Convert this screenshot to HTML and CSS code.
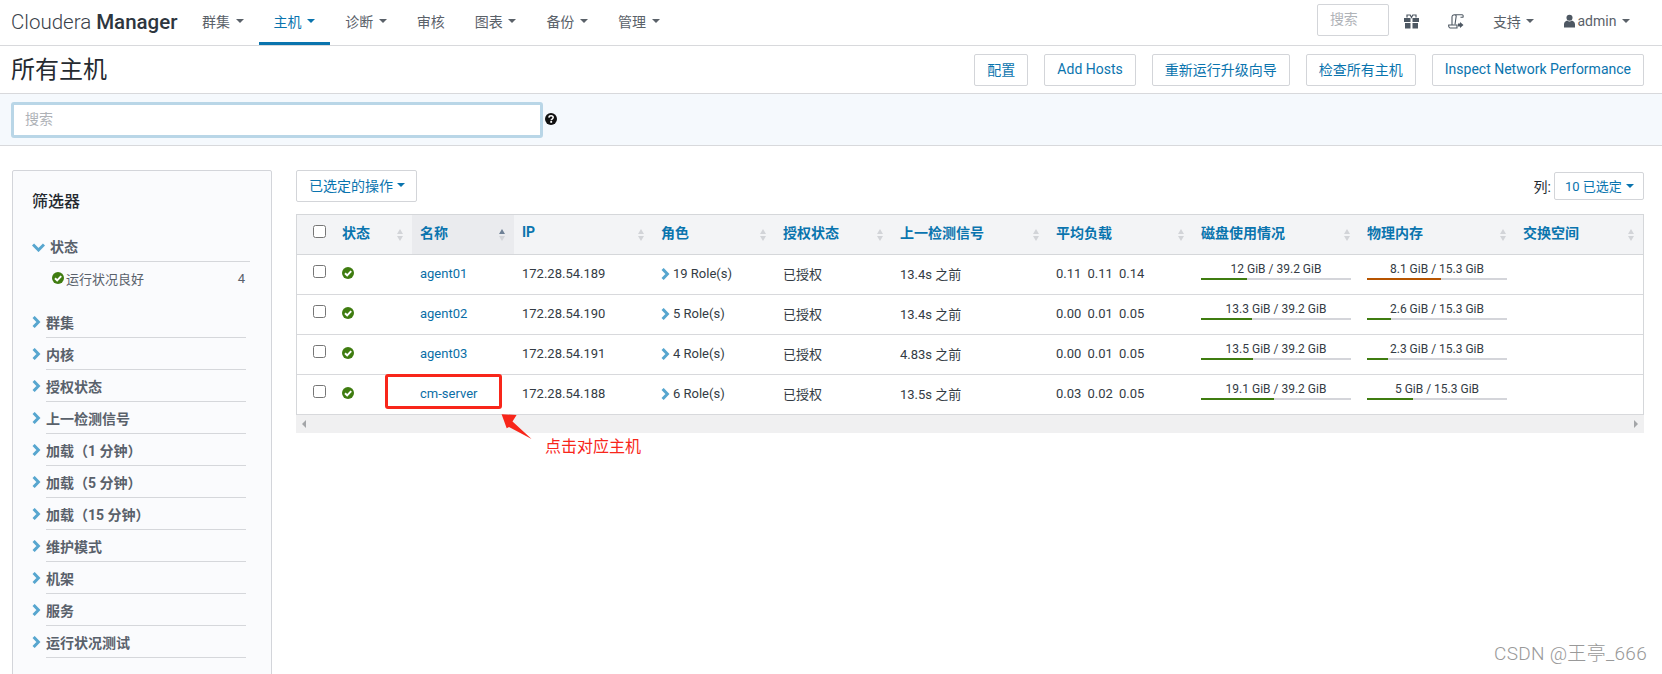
FILE: index.html
```html
<!DOCTYPE html>
<html lang="zh">
<head>
<meta charset="utf-8">
<title>所有主机</title>
<link rel="stylesheet" href="styles.css">
</head>
<body>
<svg class="defs" aria-hidden="true">
  <symbol id="ok" viewBox="0 0 12 12"><circle cx="6" cy="6" r="6" fill="#3f7c10"/><path d="M3 6.2 5.2 8.4 9.2 4.1" fill="none" stroke="#fff" stroke-width="2"/></symbol>
  <symbol id="chev" viewBox="0 0 9 12"><path d="M1.6 1 6.4 6 1.6 11" fill="none" stroke="#57a6cf" stroke-width="3"/></symbol>
  <symbol id="sort" viewBox="0 0 6 12"><path d="M3 0 6 5H0Z" fill="#d2d4d8"/><path d="M3 12 6 7H0Z" fill="#d2d4d8"/></symbol>
  <symbol id="sorted" viewBox="0 0 6 12"><path d="M3 0 6 5H0Z" fill="#6f8196"/><path d="M3 12 6 7H0Z" fill="#d2d4d8"/></symbol>
</svg>

<header class="topnav">
  <div class="logo">Cloudera <b>Manager</b></div>
  <nav class="menu">
    <a class="menu-item">群集<i class="caret"></i></a>
    <a class="menu-item active">主机<i class="caret"></i></a>
    <a class="menu-item">诊断<i class="caret"></i></a>
    <a class="menu-item">审核</a>
    <a class="menu-item">图表<i class="caret"></i></a>
    <a class="menu-item">备份<i class="caret"></i></a>
    <a class="menu-item">管理<i class="caret"></i></a>
  </nav>
  <div class="nav-right">
    <div class="nav-search">搜索</div>
    <a class="menu-item icon-item"><svg class="icon15" viewBox="0 0 15 15"><path d="M3 3.5V1h3.2L7.5 3.5 8.8 1H12v2.5" fill="none" stroke="#4e5863" stroke-width="1.2"/><path d="M0 4h6.5v4H0ZM8.5 4H15v4H8.5ZM1 9h5.5v5.5H1ZM8.5 9H14v5.5H8.5Z" fill="#4e5863"/></svg></a>
    <a class="menu-item icon-item"><svg class="icon16" viewBox="0 0 16 15"><path d="M4 11V3C4 1.500 5 .7 6.500 .7H14C15 .7 15.500 1.600 15 3.200H12.500M6.500 .7C8 .7 8.500 1.800 8 3.500L7 10.500" fill="none" stroke="#4e5863" stroke-width="1.100"/><path d="M.7 11H9V14H2C1 14 .5 12 .7 11Z" fill="none" stroke="#4e5863" stroke-width="1.100"/><path d="M10 9.500H12V8L15.500 11 12 14V12.500H10Z" fill="#4e5863"/></svg></a>
    <a class="menu-item">支持<i class="caret"></i></a>
    <a class="menu-item"><svg class="icon-user" viewBox="0 0 12 14"><circle cx="6" cy="3.500" r="3.300" fill="#4e5863"/><path d="M0 14V10.500C0 8 2 7 3.500 6.500 5 7.800 7 7.800 8.500 6.500 10 7 12 8 12 10.500V14Z" fill="#4e5863"/></svg><span class="user-name">admin</span><i class="caret"></i></a>
  </div>
</header>

<section class="page-head">
  <h1 class="page-title">所有主机</h1>
  <div class="actions">
    <a class="btn">配置</a>
    <a class="btn">Add Hosts</a>
    <a class="btn">重新运行升级向导</a>
    <a class="btn">检查所有主机</a>
    <a class="btn">Inspect Network Performance</a>
  </div>
</section>

<section class="search-band">
  <div class="search-input">搜索</div>
  <svg class="help" viewBox="0 0 12 12"><circle cx="6" cy="6" r="6" fill="#111"/><path d="M3.900 4.600C4 3.300 5 2.800 6.100 2.800 7.400 2.800 8.200 3.600 8.200 4.600 8.200 6 6.200 6 6.200 7.200" fill="none" stroke="#fff" stroke-width="1.500"/><rect x="5.300" y="8" width="1.800" height="1.800" fill="#fff"/></svg>
</section>

<main class="main">
  <aside class="filters">
    <h2 class="filters-title">筛选器</h2>
    <div class="group-open">
      <svg class="chev-down" viewBox="0 0 13 9"><path d="M1 1.500 6.500 7 12 1.500" fill="none" stroke="#57a6cf" stroke-width="3"/></svg>
      <span class="group-open-label">状态</span>
    </div>
    <div class="sub-row">
      <svg class="ok-icon"><use href="#ok"/></svg>
      <span class="sub-label">运行状况良好</span>
      <span class="sub-count">4</span>
    </div>
    <div class="group"><svg class="chev"><use href="#chev"/></svg><span class="group-label">群集</span></div>
    <div class="group"><svg class="chev"><use href="#chev"/></svg><span class="group-label">内核</span></div>
    <div class="group"><svg class="chev"><use href="#chev"/></svg><span class="group-label">授权状态</span></div>
    <div class="group"><svg class="chev"><use href="#chev"/></svg><span class="group-label">上一检测信号</span></div>
    <div class="group"><svg class="chev"><use href="#chev"/></svg><span class="group-label">加载（1 分钟）</span></div>
    <div class="group"><svg class="chev"><use href="#chev"/></svg><span class="group-label">加载（5 分钟）</span></div>
    <div class="group"><svg class="chev"><use href="#chev"/></svg><span class="group-label">加载（15 分钟）</span></div>
    <div class="group"><svg class="chev"><use href="#chev"/></svg><span class="group-label">维护模式</span></div>
    <div class="group"><svg class="chev"><use href="#chev"/></svg><span class="group-label">机架</span></div>
    <div class="group"><svg class="chev"><use href="#chev"/></svg><span class="group-label">服务</span></div>
    <div class="group"><svg class="chev"><use href="#chev"/></svg><span class="group-label">运行状况测试</span></div>
  </aside>

  <div class="content">
    <div class="toolbar">
      <a class="btn btn-ops">已选定的操作<i class="caret caret-blue"></i></a>
      <div class="cols-pick">
        <span class="cols-label">列:</span>
        <a class="btn btn-cols">10 已选定<i class="caret caret-blue"></i></a>
      </div>
    </div>
    <div class="table-wrap">
      <table class="hosts">
        <colgroup>
          <col class="c-check"><col class="c-status"><col class="c-name"><col class="c-ip"><col class="c-role"><col class="c-auth"><col class="c-beat"><col class="c-load"><col class="c-disk"><col class="c-mem"><col class="c-swap">
        </colgroup>
        <thead>
          <tr>
            <th class="check-cell"><input type="checkbox"></th>
            <th><div class="th-in">状态<svg class="sort"><use href="#sort"/></svg></div></th>
            <th class="sorted"><div class="th-in">名称<svg class="sort"><use href="#sorted"/></svg></div></th>
            <th><div class="th-in">IP<svg class="sort"><use href="#sort"/></svg></div></th>
            <th><div class="th-in">角色<svg class="sort"><use href="#sort"/></svg></div></th>
            <th><div class="th-in">授权状态<svg class="sort"><use href="#sort"/></svg></div></th>
            <th><div class="th-in">上一检测信号<svg class="sort"><use href="#sort"/></svg></div></th>
            <th><div class="th-in">平均负载<svg class="sort"><use href="#sort"/></svg></div></th>
            <th><div class="th-in">磁盘使用情况<svg class="sort"><use href="#sort"/></svg></div></th>
            <th><div class="th-in">物理内存<svg class="sort"><use href="#sort"/></svg></div></th>
            <th><div class="th-in">交换空间<svg class="sort"><use href="#sort"/></svg></div></th>
          </tr>
        </thead>
        <tbody>
          <tr>
            <td class="check-cell"><input type="checkbox"></td>
            <td><svg class="ok-icon ok-row"><use href="#ok"/></svg></td>
            <td><a class="link">agent01</a></td>
            <td>172.28.54.189</td>
            <td><svg class="chev-role"><use href="#chev"/></svg>19 Role(s)</td>
            <td>已授权</td>
            <td>13.4s 之前</td>
            <td><span class="load">0.11</span><span class="load">0.11</span><span class="load">0.14</span></td>
            <td class="meter-cell"><div class="meter-label">12 GiB / 39.2 GiB</div><div class="meter"><div class="fill" style="width:30.6%"></div></div></td>
            <td class="meter-cell"><div class="meter-label">8.1 GiB / 15.3 GiB</div><div class="meter"><div class="fill warn" style="width:53%"></div></div></td>
            <td></td>
          </tr>
          <tr>
            <td class="check-cell"><input type="checkbox"></td>
            <td><svg class="ok-icon ok-row"><use href="#ok"/></svg></td>
            <td><a class="link">agent02</a></td>
            <td>172.28.54.190</td>
            <td><svg class="chev-role"><use href="#chev"/></svg>5 Role(s)</td>
            <td>已授权</td>
            <td>13.4s 之前</td>
            <td><span class="load">0.00</span><span class="load">0.01</span><span class="load">0.05</span></td>
            <td class="meter-cell"><div class="meter-label">13.3 GiB / 39.2 GiB</div><div class="meter"><div class="fill" style="width:34%"></div></div></td>
            <td class="meter-cell"><div class="meter-label">2.6 GiB / 15.3 GiB</div><div class="meter"><div class="fill" style="width:17%"></div></div></td>
            <td></td>
          </tr>
          <tr>
            <td class="check-cell"><input type="checkbox"></td>
            <td><svg class="ok-icon ok-row"><use href="#ok"/></svg></td>
            <td><a class="link">agent03</a></td>
            <td>172.28.54.191</td>
            <td><svg class="chev-role"><use href="#chev"/></svg>4 Role(s)</td>
            <td>已授权</td>
            <td>4.83s 之前</td>
            <td><span class="load">0.00</span><span class="load">0.01</span><span class="load">0.05</span></td>
            <td class="meter-cell"><div class="meter-label">13.5 GiB / 39.2 GiB</div><div class="meter"><div class="fill" style="width:34.7%"></div></div></td>
            <td class="meter-cell"><div class="meter-label">2.3 GiB / 15.3 GiB</div><div class="meter"><div class="fill" style="width:15%"></div></div></td>
            <td></td>
          </tr>
          <tr>
            <td class="check-cell"><input type="checkbox"></td>
            <td><svg class="ok-icon ok-row"><use href="#ok"/></svg></td>
            <td><a class="link">cm-server</a></td>
            <td>172.28.54.188</td>
            <td><svg class="chev-role"><use href="#chev"/></svg>6 Role(s)</td>
            <td>已授权</td>
            <td>13.5s 之前</td>
            <td><span class="load">0.03</span><span class="load">0.02</span><span class="load">0.05</span></td>
            <td class="meter-cell"><div class="meter-label">19.1 GiB / 39.2 GiB</div><div class="meter"><div class="fill" style="width:48.8%"></div></div></td>
            <td class="meter-cell"><div class="meter-label">5 GiB / 15.3 GiB</div><div class="meter"><div class="fill" style="width:33%"></div></div></td>
            <td></td>
          </tr>
        </tbody>
      </table>
    </div>
    <div class="hscroll"><i class="arrow-left"></i><i class="arrow-right"></i></div>
  </div>
</main>

<div class="mark-box"></div>
<svg class="mark-arrow" viewBox="0 0 34 27"><path d="M1.600 .3 16.600 1 12.500 7.500 31.600 25 9 13 6.700 14.300Z" fill="#f8261a"/></svg>
<div class="mark-text">点击对应主机</div>
<div class="watermark">CSDN @王亭_666</div>
</body>
</html>
```
FILE: styles.css
```css
* { box-sizing: border-box; }
html, body { height: 100%; overflow: hidden; }
body {
  margin: 0;
  font-family: Roboto, "Noto Sans CJK SC", sans-serif;
  font-size: 13px;
  color: #333b44;
  background: #fff;
  position: relative;
  text-spacing-trim: space-all;
}
.defs { display: none; }
a { text-decoration: none; }

/* top navigation */
.topnav {
  display: flex;
  height: 46px;
  padding-left: 11px;
  border-bottom: 1px solid #d8d9dc;
}
.logo {
  width: 176px;
  font-size: 20.500px;
  font-weight: 300;
  line-height: 45px;
  color: #3a424a;
  white-space: nowrap;
}
.logo b { font-weight: 500; color: #2e363e; }
.menu { display: flex; }
.menu-item {
  display: flex;
  align-items: center;
  height: 45px;
  padding: 0 15px 3px;
  font-size: 14px;
  color: #5a6169;
}
.menu-item.active {
  color: #0a74ae;
  border-bottom: 3px solid #0a74ae;
  padding-bottom: 0;
}
.caret {
  display: inline-block;
  width: 0;
  height: 0;
  margin-left: 5.600px;
  border-left: 4px solid transparent;
  border-right: 4px solid transparent;
  border-top: 4px solid #5a6169;
}
.active .caret, .caret-blue { border-top-color: #0a74ae; }
.caret-blue { margin-left: 4px; }
.nav-right {
  display: flex;
  align-items: center;
  margin-left: auto;
  padding-right: 17px;
}
.nav-search {
  align-self: flex-start;
  width: 72px;
  height: 32px;
  margin-top: 4px;
  padding-left: 12px;
  line-height: 28px;
  font-size: 14px;
  color: #b0b3b8;
  border: 1px solid #d3d5d9;
  border-radius: 2px;
}
.icon-item { padding-right: 14px; }
.icon15 { width: 15px; height: 15px; }
.icon16 { width: 16px; height: 15px; }
.icon-user { width: 11px; height: 14px; margin-right: 2px; }
.user-name { font-size: 14px; }

/* page head */
.page-head {
  display: flex;
  align-items: center;
  justify-content: space-between;
  height: 48px;
  padding: 0 18px 0 11px;
  border-bottom: 1px solid #d8d9dc;
}
.page-title {
  margin: 0;
  padding-bottom: 4px;
  font-size: 24px;
  font-weight: 400;
  color: #252a30;
}
.actions { display: flex; gap: 16px; margin-top: 1px; }
.btn {
  display: inline-flex;
  align-items: center;
  height: 32px;
  padding: 0 12px 2px;
  font-size: 14px;
  color: #0a74ae;
  background: #fff;
  border: 1px solid #d3d5d9;
  border-radius: 2px;
  white-space: nowrap;
}

/* search band */
.search-band {
  display: flex;
  height: 52px;
  padding: 8px 0 0 11px;
  background: #f5f9fd;
  border-bottom: 1px solid #d8d9dc;
}
.search-input {
  width: 532px;
  height: 36px;
  padding-left: 11px;
  font-size: 14px;
  line-height: 28px;
  color: #aeb2b7;
  background: #fff;
  border: 3px solid #b9d6e7;
  border-radius: 3px;
}
.help {
  width: 12px;
  height: 12px;
  margin: 11px 0 0 2px;
}

/* main area */
.main {
  display: flex;
  align-items: flex-start;
  padding: 24px 18px 0 12px;
}

/* filters */
.filters {
  flex: none;
  width: 260px;
  height: 560px;
  padding: 20px 0 0 19px;
  background: #fafbfd;
  border: 1px solid #d3d5da;
  border-radius: 2px;
}
.filters-title {
  margin: 0 0 20px;
  font-size: 16px;
  font-weight: 500;
  line-height: 22px;
  color: #252a30;
}
.group-open {
  display: flex;
  align-items: center;
  height: 29px;
}
.chev-down { flex: none; width: 13px; height: 9px; margin-right: 5px; }
.group-open-label {
  width: 200px;
  height: 29px;
  font-size: 14px;
  font-weight: 700;
  line-height: 28px;
  color: #59616b;
  border-bottom: 1px solid #d5d7db;
}
.sub-row {
  display: flex;
  align-items: center;
  width: 213px;
  height: 32px;
  margin: 0 0 12px;
  padding-left: 20px;
}
.ok-icon { flex: none; width: 12px; height: 12px; }
.sub-label { margin-left: 2px; color: #59616b; }
.sub-count { margin-left: auto; color: #59616b; }
.group { display: flex; align-items: center; height: 32px; }
.chev { flex: none; width: 9px; height: 12px; margin-right: 5px; }
.group-label {
  width: 200px;
  height: 32px;
  font-size: 14px;
  font-weight: 700;
  line-height: 35px;
  color: #59616b;
  border-bottom: 1px solid #d5d7db;
  white-space: nowrap;
}

/* content */
.content { flex: none; width: 1348px; margin-left: 24px; }
.toolbar {
  display: flex;
  align-items: center;
  justify-content: space-between;
  height: 32px;
  margin-bottom: 12px;
}
.btn-ops { width: 121px; }
.cols-pick { display: flex; align-items: center; }
.cols-label { font-size: 14px; margin-right: 3px; color: #252a30; }
.btn-cols { width: 90px; height: 28px; padding: 0 10px 1px; font-size: 13px; }

/* table */
.table-wrap {
  border: 1px solid #d5d7da;
  border-bottom: 0;
}
.hosts {
  width: 1346px;
  table-layout: fixed;
  border-collapse: separate;
  border-spacing: 0;
}
.c-check { width: 37px; }
.c-status { width: 78px; }
.c-name { width: 102px; }
.c-ip { width: 139px; }
.c-role { width: 122px; }
.c-auth { width: 117px; }
.c-beat { width: 156px; }
.c-load { width: 145px; }
.c-disk { width: 166px; }
.c-mem { width: 156px; }
.c-swap { width: 128px; }
.hosts th {
  height: 40px;
  padding: 0;
  font-size: 14px;
  font-weight: 700;
  text-align: left;
  color: #0a74ae;
  background: #f3f4f6;
  border-bottom: 1px solid #d5d7da;
}
.hosts th.sorted { background: #eaebee; }
.th-in {
  display: flex;
  align-items: center;
  justify-content: space-between;
  padding: 0 9px 6px 8px;
}
.sort { width: 6px; height: 12px; margin-top: 6px; }
.hosts td {
  height: 40px;
  padding: 0 8px 2px;
  color: #333b44;
  white-space: nowrap;
  border-bottom: 1px solid #d8d9dc;
}
.hosts .check-cell { padding: 10px 0 0 16px; vertical-align: top; }
.check-cell input { display: block; margin: 0; }
.ok-row { display: block; margin-top: -2px; }
.link { color: #0a6ea6; }
.chev-role { width: 9px; height: 12px; margin-right: 3px; vertical-align: -1.500px; }
.load { display: inline-block; width: 31.500px; }
.hosts .meter-cell { vertical-align: top; padding-top: 7px; }
.meter-label { font-size: 12px; line-height: 14px; text-align: center; }
.meter { height: 2px; margin-top: 2px; background: #d4d5da; }
.fill { height: 2px; background: #3f7c10; }
.fill.warn { background: #b65400; }
.hscroll {
  display: flex;
  align-items: center;
  justify-content: space-between;
  height: 18px;
  padding: 0 6px;
  background: #f0f0f1;
}
.arrow-left, .arrow-right {
  width: 0;
  height: 0;
  border-top: 4px solid transparent;
  border-bottom: 4px solid transparent;
}
.arrow-left { border-right: 4px solid #a3a5a8; }
.arrow-right { border-left: 4px solid #a3a5a8; }

/* annotations drawn over the screenshot */
.mark-box {
  position: absolute;
  left: 385px;
  top: 374px;
  width: 117px;
  height: 35px;
  border: 3px solid #f8261a;
  border-radius: 3px;
}
.mark-arrow {
  position: absolute;
  left: 500px;
  top: 414px;
  width: 34px;
  height: 27px;
}
.mark-text {
  position: absolute;
  left: 545px;
  top: 435px;
  font-size: 16px;
  line-height: 24px;
  color: #f8261a;
}
.watermark {
  position: absolute;
  left: 1494px;
  top: 640px;
  font-size: 19px;
  line-height: 28px;
  letter-spacing: .3px;
  font-weight: 300;
  color: #999;
  white-space: nowrap;
}
```
